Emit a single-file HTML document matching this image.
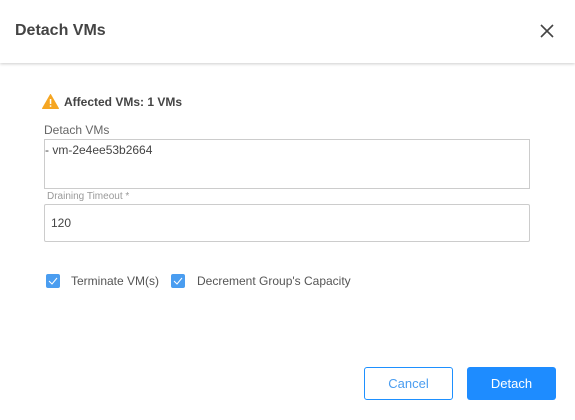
<!DOCTYPE html>
<html><head><style>
*{box-sizing:border-box;margin:0;padding:0}
body{width:575px;height:420px;background:#fff;font-family:"Liberation Sans",sans-serif;position:relative;overflow:hidden;color:#555}
.a{position:absolute}
.hdr{left:0;top:0;width:575px;height:63px;background:#fff;box-shadow:0 1px 3px rgba(0,0,0,.2)}
.cb{width:14px;height:14px;background:#4a9df0;border-radius:2px}
.cb svg{display:block}
.btn{height:33px;width:89px;border-radius:3px;font-size:13px;text-align:center;line-height:31px}
</style></head><body>
<div class="a hdr"></div>
<div class="a" style="left:15px;top:22px;font-size:16px;font-weight:bold;color:#444">Detach VMs</div>
<svg class="a" style="left:539px;top:23px" width="16" height="16" viewBox="0 0 16 16"><path d="M2 2L14 14M14 2L2 14" stroke="#444" stroke-width="1.6"/></svg>
<svg class="a" style="left:42px;top:94px" width="17" height="15" viewBox="0 0 17 15"><path d="M8.5 0.5L16.5 14.5H0.5Z" fill="#f5a623" stroke="#f5a623" stroke-linejoin="round"/><rect x="7.8" y="5" width="1.5" height="5" fill="#fff"/><rect x="7.8" y="11.3" width="1.5" height="1.5" fill="#fff"/></svg>
<div class="a" style="left:64px;top:95px;font-size:12px;font-weight:bold;color:#444">Affected VMs: 1 VMs</div>
<div class="a" style="left:44px;top:123px;font-size:12px;color:#666">Detach VMs</div>
<div class="a" style="left:44px;top:139px;width:486px;height:50px;border:1px solid #ccc"></div>
<div class="a" style="left:45px;top:143px;font-size:12px;color:#444">- vm-2e4ee53b2664</div>
<div class="a" style="left:47px;top:191px;font-size:10px;color:#999">Draining Timeout *</div>
<div class="a" style="left:44px;top:204px;width:486px;height:38px;border:1px solid #ccc;border-radius:2px"></div>
<div class="a" style="left:51px;top:216px;font-size:12px;color:#444">120</div>
<div class="a cb" style="left:46px;top:274px"><svg width="14" height="14"><path d="M3 7L6 10L11 4" stroke="#fff" fill="none" stroke-width="1"/></svg></div>
<div class="a" style="left:71px;top:274px;font-size:12px;color:#555">Terminate VM(s)</div>
<div class="a cb" style="left:171px;top:274px"><svg width="14" height="14"><path d="M3 7L6 10L11 4" stroke="#fff" fill="none" stroke-width="1"/></svg></div>
<div class="a" style="left:197px;top:274px;font-size:12px;color:#555">Decrement Group's Capacity</div>
<div class="a btn" style="left:364px;top:367px;border:1px solid #1e90ff;color:#4a9df0;background:#fff">Cancel</div>
<div class="a btn" style="left:467px;top:367px;background:#1e8cff;color:#fff;line-height:33px">Detach</div>
</body></html>
